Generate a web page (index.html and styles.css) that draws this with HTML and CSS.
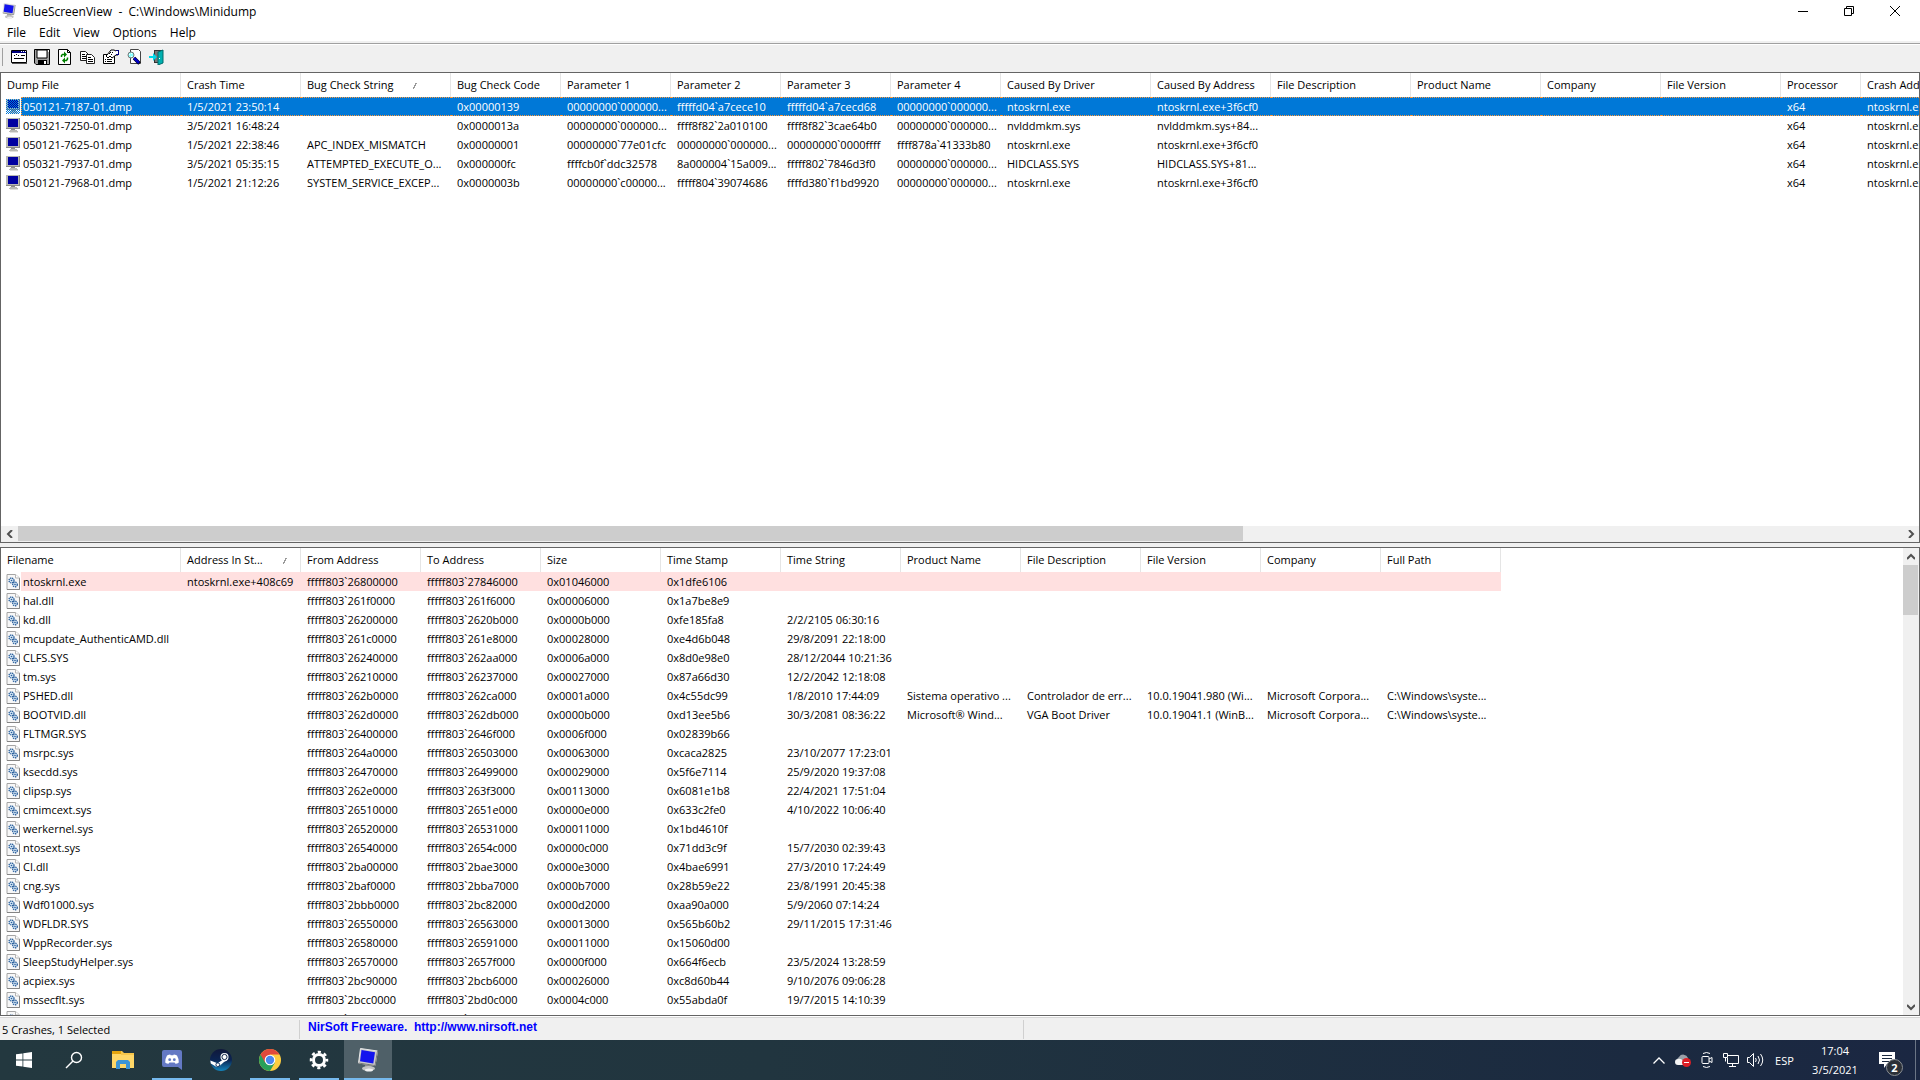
FILE: index.html
```html
<!DOCTYPE html>
<html lang="en">
<head>
  <meta charset="UTF-8">
  <meta name="viewport" content="width=device-width, initial-scale=1.0">
  <title>BlueScreenView</title>
  <link rel="stylesheet" href="styles.css">
</head>
<body>
  <svg class="defs" aria-hidden="true">
    <pattern id="check" width="2" height="2" patternUnits="userSpaceOnUse">
      <path d="M0 0h1v1H0zM1 1h1v1H1z" fill="#0078d7"/>
    </pattern>
    <symbol id="monitor" viewBox="0 0 14 15">
      <path d="M0 0h14v11H0z" fill="#b9b9b4"/>
      <path d="M13 0h1v11H0v-1h13z" fill="#8c8c88"/>
      <path d="M2 1h10v8H2z" fill="#0000a0"/>
      <path d="M5 11h4v1H5z" fill="#8c8c88"/>
      <path d="M4 12h7v1H4zM3 13h9v1H3z" fill="#b9b9b4"/>
      <path d="M4 14h8v1H4z" fill="#e0e0dc"/>
    </symbol>
    <symbol id="sysfile" viewBox="0 0 14 16">
      <path d="M1 .5h8.500L13.500 4v11.500H1z" fill="#f7f7f7" stroke="#a5a5a5"/>
      <path d="M13.500 4v11.500H1" fill="none" stroke="#858585"/>
      <path d="M9.500.5V4h4" fill="#fff" stroke="#b5b5b5"/>
      <circle cx="5.500" cy="6.500" r="2.500" fill="#d4e6f5" stroke="#2a5f9c" stroke-width="1.300" stroke-dasharray="1.300 .7"/>
      <circle cx="9" cy="10.500" r="2.300" fill="#d4e6f5" stroke="#2a5f9c" stroke-width="1.300" stroke-dasharray="1.300 .7"/>
      <circle cx="5.500" cy="6.500" r=".8" fill="#2a5f9c"/>
      <circle cx="9" cy="10.500" r=".8" fill="#2a5f9c"/>
    </symbol>
    <symbol id="bsv" viewBox="0 0 20 24">
      <path d="M2.500.5 19.500 3 17 17.500.5 15z" fill="#c9c9c9" stroke="#e8e8e8"/>
      <path d="M19.500 3 17 17.500.5 15" fill="none" stroke="#777"/>
      <path d="M3.500 2 17 4.300 15.300 15.500 2 13.300z" fill="#1414ee"/>
      <path d="M7 17h6l1 3H7z" fill="#8f8f8f"/>
      <ellipse cx="10.500" cy="20.500" rx="6.500" ry="2.500" fill="#c4c4c4"/>
      <ellipse cx="11" cy="22" rx="4" ry="1.500" fill="#f0f0f0"/>
    </symbol>
  </svg>

  <header class="titlebar">
    <svg class="app-icon" viewBox="0 0 20 24"><use href="#bsv"/></svg>
    <h1>BlueScreenView  -  C:\Windows\Minidump</h1>
    <div class="window-buttons">
      <button aria-label="Minimize"><svg width="10" height="10"><path d="M0 5h10v1H0z"/></svg></button>
      <button aria-label="Restore"><svg width="10" height="10" fill="none" stroke="#000"><path d="M.5 2.500h7v7h-7zM2.500 2.500v-2h7v7h-2"/></svg></button>
      <button aria-label="Close"><svg width="10" height="10" stroke="#000"><path d="M0 0l10 10M10 0L0 10"/></svg></button>
    </div>
  </header>

  <nav class="menu">
    <button>File</button>
    <button>Edit</button>
    <button>View</button>
    <button>Options</button>
    <button>Help</button>
  </nav>

  <div class="toolbar">
    <button aria-label="Advanced options">
      <svg width="16" height="16"><path d="M.5 1.500h15v12H.5z" fill="#fff" stroke="#000"/><path d="M1 2h14v2H1z" fill="#000080"/><path d="M10 2h1v1h-1zM12 2h1v1h-1zM14 2h1v1h-1z" fill="#fff"/><path d="M1 14h15v1H1z" fill="#555"/><path d="M3 6h1v1H3zM5 5h1v1H5zM7 6h1v1H7zM10 6h4v1h-4zM3 9h10v1H3z" fill="#000"/></svg>
    </button>
    <button aria-label="Save">
      <svg width="16" height="16"><path d="M.5.5h15v15H2l-1.500-1.500z" fill="#a0a0a0" stroke="#000"/><path d="M3 1h10v8H3z" fill="#fff" stroke="#000"/><path d="M4 11h9v5H4z"/><path d="M10 12h2v3h-2z" fill="#fff"/><path d="M14 1h1v2h-1z" fill="#fff"/></svg>
    </button>
    <button aria-label="Refresh">
      <svg width="16" height="16"><path d="M1.500.5h9l3 3v12h-12z" fill="#fff" stroke="#000"/><path d="M10.500.5v3h3" fill="none" stroke="#000"/><path d="M4.500 8V6.500l1-1H8M10.500 8.500V10l-1 1.500H7" fill="none" stroke="#008000" stroke-width="1.500"/><path d="M7 2.500v6l3-3zM8 8.500v6l-3-3z" fill="#008000"/></svg>
    </button>
    <button aria-label="Copy">
      <svg width="16" height="16"><path d="M.5 2.500h5l3 3v6h-8z" fill="#fff" stroke="#222"/><path d="M2 5h3v1H2zM2 7h5v1H2zM2 9h5v1H2z"/><path d="M6.500 5.500h5l3 3v6h-8z" fill="#fff" stroke="#222"/><path d="M8 8h3v1H8zM8 10h5v1H8zM8 12h5v1H8z"/></svg>
    </button>
    <button aria-label="Properties">
      <svg width="16" height="16"><path d="M.5 5.500h11v9H.5z" fill="#fff" stroke="#000"/><path d="M2 10h1v1H2zM4 10h5v1H4zM2 12h1v1H2zM4 12h5v1H4z"/><path d="M4 6l4-5h3l2 1h2v4h-2L9 9 7 7 5 9 3 7z" fill="#fff" stroke="#000"/><path d="M6 4h1v1H6zM8 5h1v1H8zM7 3h1v1H7zM9 3h1v1H9z"/><path d="M13 1h3v5h-3z" fill="#000080"/><path d="M13 2h2v3h-2z" fill="#fff"/></svg>
    </button>
    <button aria-label="Find">
      <svg width="16" height="16"><path d="M4.500.5h8l2 2v12h-10z" fill="#fff" stroke="#444"/><circle cx="5" cy="6" r="3" fill="#8ff" stroke="#777"/><path d="M3 5h1v1H3zM5 4h1v1H5zM5 7h1v1H5z" fill="#fff"/><path d="M8 9l5.500 5.500" stroke="#000" stroke-width="3.500"/><path d="M8 9l5 5" stroke="#0000c8" stroke-width="2.500"/></svg>
    </button>
    <button aria-label="Exit">
      <svg width="16" height="16"><path d="M5 1h9v13H5z" fill="#333"/><path d="M6 2h4v11H6z" fill="#777"/><path d="M9 3l5-2v13l-5 2z" fill="#00b0b0" stroke="#006c6c"/><path d="M10 9h1v1h-1z" fill="#fff"/><path d="M0 7h4V4l4 4-4 4V9H0z" fill="#00d8e8"/></svg>
    </button>
  </div>

  <main>
    <section class="pane crashes">
      <div class="view">
        <table>
          <colgroup id="crash-cols"></colgroup>
          <thead><tr id="crash-head"></tr></thead>
          <tbody id="crash-rows"></tbody>
        </table>
      </div>
      <div class="scroll horizontal">
        <button aria-label="Scroll left"><svg width="8" height="8"><path d="M6 0L2 4l4 4"/></svg></button>
        <div class="track"><div class="thumb"></div></div>
        <button aria-label="Scroll right"><svg width="8" height="8"><path d="M2 0l4 4-4 4"/></svg></button>
      </div>
    </section>

    <section class="pane drivers">
      <div class="view">
        <table>
          <colgroup id="driver-cols"></colgroup>
          <thead><tr id="driver-head"></tr></thead>
          <tbody id="driver-rows"></tbody>
        </table>
      </div>
      <div class="scroll vertical">
        <button aria-label="Scroll up"><svg width="8" height="8"><path d="M0 6l4-4 4 4"/></svg></button>
        <div class="track"><div class="thumb"></div></div>
        <button aria-label="Scroll down"><svg width="8" height="8"><path d="M0 2l4 4 4-4"/></svg></button>
      </div>
    </section>
  </main>

  <footer class="status">
    <span class="count">5 Crashes, 1 Selected</span>
    <a href="http://www.nirsoft.net">NirSoft Freeware.  http://www.nirsoft.net</a>
  </footer>

  <div class="taskbar">
    <button aria-label="Start"><svg width="16" height="16" fill="#fff"><path d="M0 2.300L6.500 1.400v6.200H0zM7.300 1.300L16 0v7.600H7.300zM0 8.400h6.500v6.200L0 13.700zM7.300 8.400H16V16l-8.700-1.300z"/></svg></button>
    <button class="search" aria-label="Search"><svg width="18" height="18" fill="none" stroke="#fff" stroke-width="1.400"><circle cx="11.500" cy="6.500" r="5"/><path d="M8 10l-7 7"/></svg></button>
    <button aria-label="File Explorer">
      <svg width="22" height="18"><path d="M0 0h9l2 2h11v15H0z" fill="#e5a50f"/><path d="M0 3h22v14H0z" fill="#ffd767"/><path d="M9 0h1l2 2h10v2H9z" fill="#f7c64a"/><path d="M4 18v-7l2-2h10l2 2v7h-4v-5H8v5z" fill="#3c95d6"/></svg>
    </button>
    <button class="open" aria-label="Discord">
      <svg width="20" height="20"><path d="M2 0h16a2 2 0 0 1 2 2v18l-4-3H2a2 2 0 0 1-2-2V2a2 2 0 0 1 2-2z" fill="#6479c4"/><path d="M5 5.500q2-1 3.200-1l.5.700h2.600l.5-.700q1.200 0 3.200 1 2 3.500 1.800 7-1.500 1.200-3.300 1.300l-.9-1.400H7.400l-.9 1.400q-1.800-.1-3.300-1.300Q3 9 5 5.500z" fill="#fff"/><circle cx="7.700" cy="9.700" r="1.400" fill="#6479c4"/><circle cx="12.300" cy="9.700" r="1.400" fill="#6479c4"/></svg>
    </button>
    <button aria-label="Steam">
      <svg width="22" height="22"><defs><linearGradient id="steam" x2="0" y2="1"><stop offset="0" stop-color="#10183a"/><stop offset=".5" stop-color="#0b2452"/><stop offset="1" stop-color="#1385bd"/></linearGradient></defs><circle cx="11" cy="11" r="11" fill="url(#steam)"/><path d="M.3 11.500l7.200 2.700 5-3.200 1-3 3.500 3.500-3 1.500-4.500 4A3.500 3.500 0 0 1 5 17L.8 14.500z" fill="#fff"/><circle cx="14.500" cy="8" r="4" fill="#fff"/><circle cx="14.500" cy="8" r="2.600" fill="#fff" stroke="#0f2347"/><circle cx="7.800" cy="15.700" r="1.900" fill="none" stroke="#0f2f5c"/></svg>
    </button>
    <button class="open" aria-label="Chrome">
      <svg width="22" height="22"><circle cx="11" cy="11" r="11" fill="#fccd3f"/><path d="M11 11L1.500 5.500A11 11 0 0 0 11 22l5-8.500z" fill="#28a05a"/><path d="M1.500 5.500A11 11 0 0 1 20.500 5.500H11L6.200 13.700z" fill="#e04a3c"/><circle cx="11" cy="11" r="5.300" fill="#fff"/><circle cx="11" cy="11" r="4.200" fill="#4a87ee"/></svg>
    </button>
    <button class="open" aria-label="Settings">
      <svg width="20" height="20" fill="none" stroke="#fff"><circle cx="10" cy="10" r="5.500" stroke-width="3"/><circle cx="10" cy="10" r="8" stroke-width="2.500" stroke-dasharray="3.140 3.143" stroke-dashoffset="1.500"/></svg>
    </button>
    <button class="open current" aria-label="BlueScreenView"><svg width="20" height="24"><use href="#bsv"/></svg></button>

    <div class="tray">
      <button aria-label="Show hidden icons"><svg width="12" height="7" fill="none" stroke="#fff" stroke-width="1.300"><path d="M.5 6.500L6 1l5.500 5.500"/></svg></button>
      <button aria-label="OneDrive"><svg width="16" height="14"><path d="M4 11a4 4 0 0 1 0-7 5 5 0 0 1 9 1v6z" fill="#9aa0a8"/><path d="M3 12a3 3 0 0 1 0-6q3-1 5 2l2 4z" fill="#f4f4f4"/><circle cx="11.500" cy="9.500" r="4.500" fill="#dc1f26"/><path d="M9 9h5v1H9z" fill="#fff"/></svg></button>
      <button aria-label="Meet now"><svg width="12" height="16" fill="none" stroke="#fff"><rect x="1" y="4.500" width="7" height="7" rx="1"/><path d="M8 7l3-1.500v5L8 9M2 1.500q3.500-2 7 0M2 14.500q3.500 2 7 0"/></svg></button>
      <button aria-label="Network"><svg width="16" height="14" fill="none" stroke="#fff"><path d="M5 2.500h10.500v8H4.500V5M9.500 10.500v3M6 13.500h7M.5.500h4v4h-4zM2.500 4.500v4"/></svg></button>
      <button aria-label="Volume"><svg width="17" height="14" fill="none" stroke="#fff"><path d="M.5 4.500h2l4-4v13l-4-4h-2zM8.500 5q1.500 2 0 4M11 3q3 4 0 8M13.500 1q4.500 6 0 12"/></svg></button>
      <button class="lang">ESP</button>
      <button class="clock">17:04<br>3/5/2021</button>
      <button class="notes" aria-label="Notifications">
        <svg width="16" height="16"><path d="M0 0h16v12H8l-3 4v-4H0z" fill="#fff"/><path d="M3 3h10v1H3zM3 6h10v1H3zM3 9h7v1H3z" fill="#1b2a40"/></svg>
        <span class="badge">2</span>
      </button>
      <button class="desktop" aria-label="Show desktop"></button>
    </div>
  </div>

  <script>
    const crashCols = [
      ['Dump File', 180], ['Crash Time', 120], ['Bug Check String', 150], ['Bug Check Code', 110],
      ['Parameter 1', 110], ['Parameter 2', 110], ['Parameter 3', 110], ['Parameter 4', 110],
      ['Caused By Driver', 150], ['Caused By Address', 120], ['File Description', 140], ['Product Name', 130],
      ['Company', 120], ['File Version', 120], ['Processor', 80], ['Crash Address', 120]
    ];
    const crashes = [
      '050121-7187-01.dmp|1/5/2021 23:50:14||0x00000139|00000000`000000...|fffffd04`a7cece10|fffffd04`a7cecd68|00000000`000000...|ntoskrnl.exe|ntoskrnl.exe+3f6cf0|||||x64|ntoskrnl.exe',
      '050321-7250-01.dmp|3/5/2021 16:48:24||0x0000013a|00000000`000000...|ffff8f82`2a010100|ffff8f82`3cae64b0|00000000`000000...|nvlddmkm.sys|nvlddmkm.sys+84...|||||x64|ntoskrnl.exe',
      '050121-7625-01.dmp|1/5/2021 22:38:46|APC_INDEX_MISMATCH|0x00000001|00000000`77e01cfc|00000000`000000...|00000000`0000ffff|ffff878a`41333b80|ntoskrnl.exe|ntoskrnl.exe+3f6cf0|||||x64|ntoskrnl.exe',
      '050321-7937-01.dmp|3/5/2021 05:35:15|ATTEMPTED_EXECUTE_O...|0x000000fc|ffffcb0f`ddc32578|8a000004`15a009...|fffff802`7846d3f0|00000000`000000...|HIDCLASS.SYS|HIDCLASS.SYS+81...|||||x64|ntoskrnl.exe',
      '050121-7968-01.dmp|1/5/2021 21:12:26|SYSTEM_SERVICE_EXCEP...|0x0000003b|00000000`c00000...|fffff804`39074686|ffffd380`f1bd9920|00000000`000000...|ntoskrnl.exe|ntoskrnl.exe+3f6cf0|||||x64|ntoskrnl.exe'
    ];

    const driverCols = [
      ['Filename', 180], ['Address In St...', 120], ['From Address', 120], ['To Address', 120], ['Size', 120],
      ['Time Stamp', 120], ['Time String', 120], ['Product Name', 120], ['File Description', 120],
      ['File Version', 120], ['Company', 120], ['Full Path', 120]
    ];
    // name|address in stack|from|to|size|stamp|time|product|description|version|company|path
    const drivers = [
      'ntoskrnl.exe|ntoskrnl.exe+408c69|26800000|27846000|0x01046000|0x1dfe6106|',
      'hal.dll||261f0000|261f6000|0x00006000|0x1a7be8e9|',
      'kd.dll||26200000|2620b000|0x0000b000|0xfe185fa8|2/2/2105 06:30:16',
      'mcupdate_AuthenticAMD.dll||261c0000|261e8000|0x00028000|0xe4d6b048|29/8/2091 22:18:00',
      'CLFS.SYS||26240000|262aa000|0x0006a000|0x8d0e98e0|28/12/2044 10:21:36',
      'tm.sys||26210000|26237000|0x00027000|0x87a66d30|12/2/2042 12:18:08',
      'PSHED.dll||262b0000|262ca000|0x0001a000|0x4c55dc99|1/8/2010 17:44:09|Sistema operativo ...|Controlador de err...|10.0.19041.980 (Wi...|Microsoft Corpora...|C:\\Windows\\syste...',
      'BOOTVID.dll||262d0000|262db000|0x0000b000|0xd13ee5b6|30/3/2081 08:36:22|Microsoft® Wind...|VGA Boot Driver|10.0.19041.1 (WinB...|Microsoft Corpora...|C:\\Windows\\syste...',
      'FLTMGR.SYS||26400000|2646f000|0x0006f000|0x02839b66|',
      'msrpc.sys||264a0000|26503000|0x00063000|0xcaca2825|23/10/2077 17:23:01',
      'ksecdd.sys||26470000|26499000|0x00029000|0x5f6e7114|25/9/2020 19:37:08',
      'clipsp.sys||262e0000|263f3000|0x00113000|0x6081e1b8|22/4/2021 17:51:04',
      'cmimcext.sys||26510000|2651e000|0x0000e000|0x633c2fe0|4/10/2022 10:06:40',
      'werkernel.sys||26520000|26531000|0x00011000|0x1bd4610f|',
      'ntosext.sys||26540000|2654c000|0x0000c000|0x71dd3c9f|15/7/2030 02:39:43',
      'CI.dll||2ba00000|2bae3000|0x000e3000|0x4bae6991|27/3/2010 17:24:49',
      'cng.sys||2baf0000|2bba7000|0x000b7000|0x28b59e22|23/8/1991 20:45:38',
      'Wdf01000.sys||2bbb0000|2bc82000|0x000d2000|0xaa90a000|5/9/2060 07:14:24',
      'WDFLDR.SYS||26550000|26563000|0x00013000|0x565b60b2|29/11/2015 17:31:46',
      'WppRecorder.sys||26580000|26591000|0x00011000|0x15060d00|',
      'SleepStudyHelper.sys||26570000|2657f000|0x0000f000|0x664f6ecb|23/5/2024 13:28:59',
      'acpiex.sys||2bc90000|2bcb6000|0x00026000|0xc8d60b44|9/10/2076 09:06:28',
      'mssecflt.sys||2bcc0000|2bd0c000|0x0004c000|0x55abda0f|19/7/2015 14:10:39',
      'SgrmAgent.sys||265a0000|265ba000|0x0001a000|0xe6474774|26/2/2092 22:49:24'
    ];

    function fillTable(id, cols, rows, sorted, icon) {
      document.getElementById(id + '-cols').innerHTML = cols.map(c => `<col style="width:${c[1]}px">`).join('');
      document.getElementById(id + '-head').innerHTML = cols.map((c, i) =>
        `<th${i === sorted ? ' class="sorted"' : ''}>${c[0]}</th>`).join('');
      document.getElementById(id + '-rows').innerHTML = rows.map((row, r) => {
        const cells = cols.map((c, i) => row[i] || '');
        const check = id === 'crash' && r === 0 ? '<path d="M0 0h14v15H0z" fill="url(#check)"/>' : '';
        return `<tr${r === 0 ? ' class="first"' : ''}>` + cells.map((text, i) => i === 0
          ? `<td class="name"><div><svg width="14" height="${icon === 'monitor' ? 15 : 16}"><use href="#${icon}"/>${check}</svg><span>${text}</span></div></td>`
          : `<td>${text}</td>`).join('') + '</tr>';
      }).join('');
    }

    fillTable('crash', crashCols, crashes.map(r => r.split('|')), 2, 'monitor');
    fillTable('driver', driverCols, drivers.map(r => {
      const row = r.split('|');
      row[2] = 'fffff803`' + row[2];
      row[3] = 'fffff803`' + row[3];
      return row;
    }), 1, 'sysfile');
  </script>
</body>
</html>
```
FILE: styles.css
```css
* {
  box-sizing: border-box;
}
body {
  margin: 0;
  height: 100vh;
  display: flex;
  flex-direction: column;
  overflow: hidden;
  background: #f0f0f0;
  color: #000;
  font-family: 'Open Sans', 'Noto Sans', sans-serif;
  font-size: 11px;
  line-height: 17px;
}
button {
  margin: 0;
  padding: 0;
  border: none;
  background: none;
  color: inherit;
  font: inherit;
}
svg {
  display: block;
  flex: none;
}
.defs {
  position: absolute;
  width: 0;
  height: 0;
}

/* title and menu */
.titlebar {
  display: flex;
  align-items: center;
  height: 22px;
  padding: 0 2px;
  background: #fff;
}
.app-icon {
  width: 14px;
  height: 16px;
}
.titlebar h1 {
  flex: 1;
  margin: 0;
  padding: 1px 0 0 7px;
  font-size: 12px;
  font-weight: 400;
  white-space: pre;
}
.window-buttons {
  display: flex;
}
.window-buttons button {
  display: grid;
  place-items: center;
  width: 46px;
  height: 20px;
}
.menu {
  display: flex;
  gap: 13px;
  height: 19px;
  padding: 0 7px;
  background: #fff;
  font-size: 12px;
}
.menu button {
  height: 20px;
}

/* toolbar */
.toolbar {
  display: flex;
  align-items: center;
  height: 31px;
  padding: 0 5px 2px;
  border-top: 2px solid #f0f0f0;
  box-shadow: inset 0 1px #a0a0a0, inset 0 2px #fff;
}
.toolbar::before {
  content: '';
  width: 1px;
  height: 18px;
  margin: 0 4px 0 -3px;
  background: #a0a0a0;
}
.toolbar button {
  display: grid;
  place-items: center;
  width: 23px;
  height: 22px;
}

/* lists */
main {
  flex: 1;
  display: flex;
  flex-direction: column;
  gap: 4px;
  min-height: 0;
}
.pane {
  display: flex;
  min-height: 0;
  border: 1px solid #646464;
  background: #fff;
}
.crashes {
  flex: 471 1 0;
  flex-direction: column;
}
.drivers {
  flex: 469 1 0;
}
.view {
  flex: 1;
  min-width: 0;
  min-height: 0;
  overflow: hidden;
}
table {
  width: 0;
  table-layout: fixed;
  border-spacing: 0;
}
th {
  height: 24px;
  padding: 0 0 2px 6px;
  border-right: 1px solid #e5e5e5;
  font-weight: 400;
  text-align: left;
  white-space: nowrap;
}
th.sorted::after {
  content: '';
  display: inline-block;
  width: 5px;
  height: 6px;
  margin-left: 19px;
  background: linear-gradient(120deg, transparent 44%, #999 44%, #999 62%, transparent 62%);
}
td {
  height: 19px;
  padding: 0 0 0 6px;
  white-space: nowrap;
}
.name {
  padding: 0;
}
.name div {
  display: flex;
  align-items: center;
  height: 19px;
  padding-left: 5px;
}
.name svg {
  margin-right: 1px;
}
.name span {
  flex: 1;
  height: 19px;
  padding-left: 2px;
  line-height: 19px;
}
.crashes .first {
  color: #fff;
}
.crashes .first td:not(.name),
.crashes .first span {
  background: #0078d7;
  border: 1px dotted #ff9a3c;
  border-width: 1px 0;
  line-height: 17px;
}
.crashes .first span {
  border-left-width: 1px;
  padding-left: 1px;
}
.drivers .first td:not(.name),
.drivers .first span {
  background: #ffe0e0;
}

/* scroll bars */
.scroll {
  display: flex;
  flex: none;
  background: #f0f0f0;
}
.scroll button {
  display: grid;
  place-items: center;
  width: 17px;
  height: 16px;
}
.scroll path {
  fill: none;
  stroke: #505050;
  stroke-width: 2;
}
.track {
  flex: 1;
}
.thumb {
  background: #cdcdcd;
}
.horizontal .thumb {
  width: 65%;
  height: 15px;
}
.vertical {
  flex-direction: column;
  width: 16px;
}
.vertical button {
  width: 16px;
  height: 17px;
}
.vertical .thumb {
  width: 15px;
  height: 50px;
}

/* status bar */
.status {
  display: flex;
  height: 24px;
  padding: 3px 0 1px 2px;
  border-top: 1px solid #fff;
  box-shadow: inset 0 1px #d7d7d7;
}
.count {
  width: 298px;
  border-right: 1px solid #d0d0d0;
  line-height: 20px;
}
.status a {
  width: 724px;
  padding-left: 8px;
  border-right: 1px solid #d0d0d0;
  color: #0000ff;
  font: bold 12px/14px 'Liberation Sans', Arial, sans-serif;
  text-decoration: none;
  white-space: pre;
}

/* taskbar */
.taskbar {
  display: flex;
  gap: 1px;
  height: 40px;
  background: linear-gradient(90deg, #23383f, #21353f 40%, #1b2a40 85%, #1b2742);
  color: #fff;
}
.taskbar button {
  display: grid;
  place-items: center;
  width: 48px;
}
.taskbar .search {
  width: 49px;
}
.taskbar .open {
  background: linear-gradient(#76b9ed, #76b9ed) center bottom / 40px 2px no-repeat;
}
.taskbar .current {
  background-color: #4f6068;
  background-size: 48px 2px;
}
.tray {
  display: flex;
  margin-left: auto;
}
.tray button {
  width: 24px;
}
.tray .lang {
  width: 35px;
}
.tray .clock {
  display: block;
  width: 66px;
  line-height: 19px;
}
.tray .notes {
  position: relative;
  width: 38px;
}
.badge {
  position: absolute;
  left: 18px;
  top: 19px;
  width: 17px;
  height: 17px;
  border: 1px solid #8a8f94;
  border-radius: 50%;
  background: #2b3038;
  font-weight: 700;
  line-height: 15px;
  text-align: center;
}
.tray .desktop {
  width: 5px;
  margin-left: 9px;
  border-left: 1px solid #6b7585;
}
```
